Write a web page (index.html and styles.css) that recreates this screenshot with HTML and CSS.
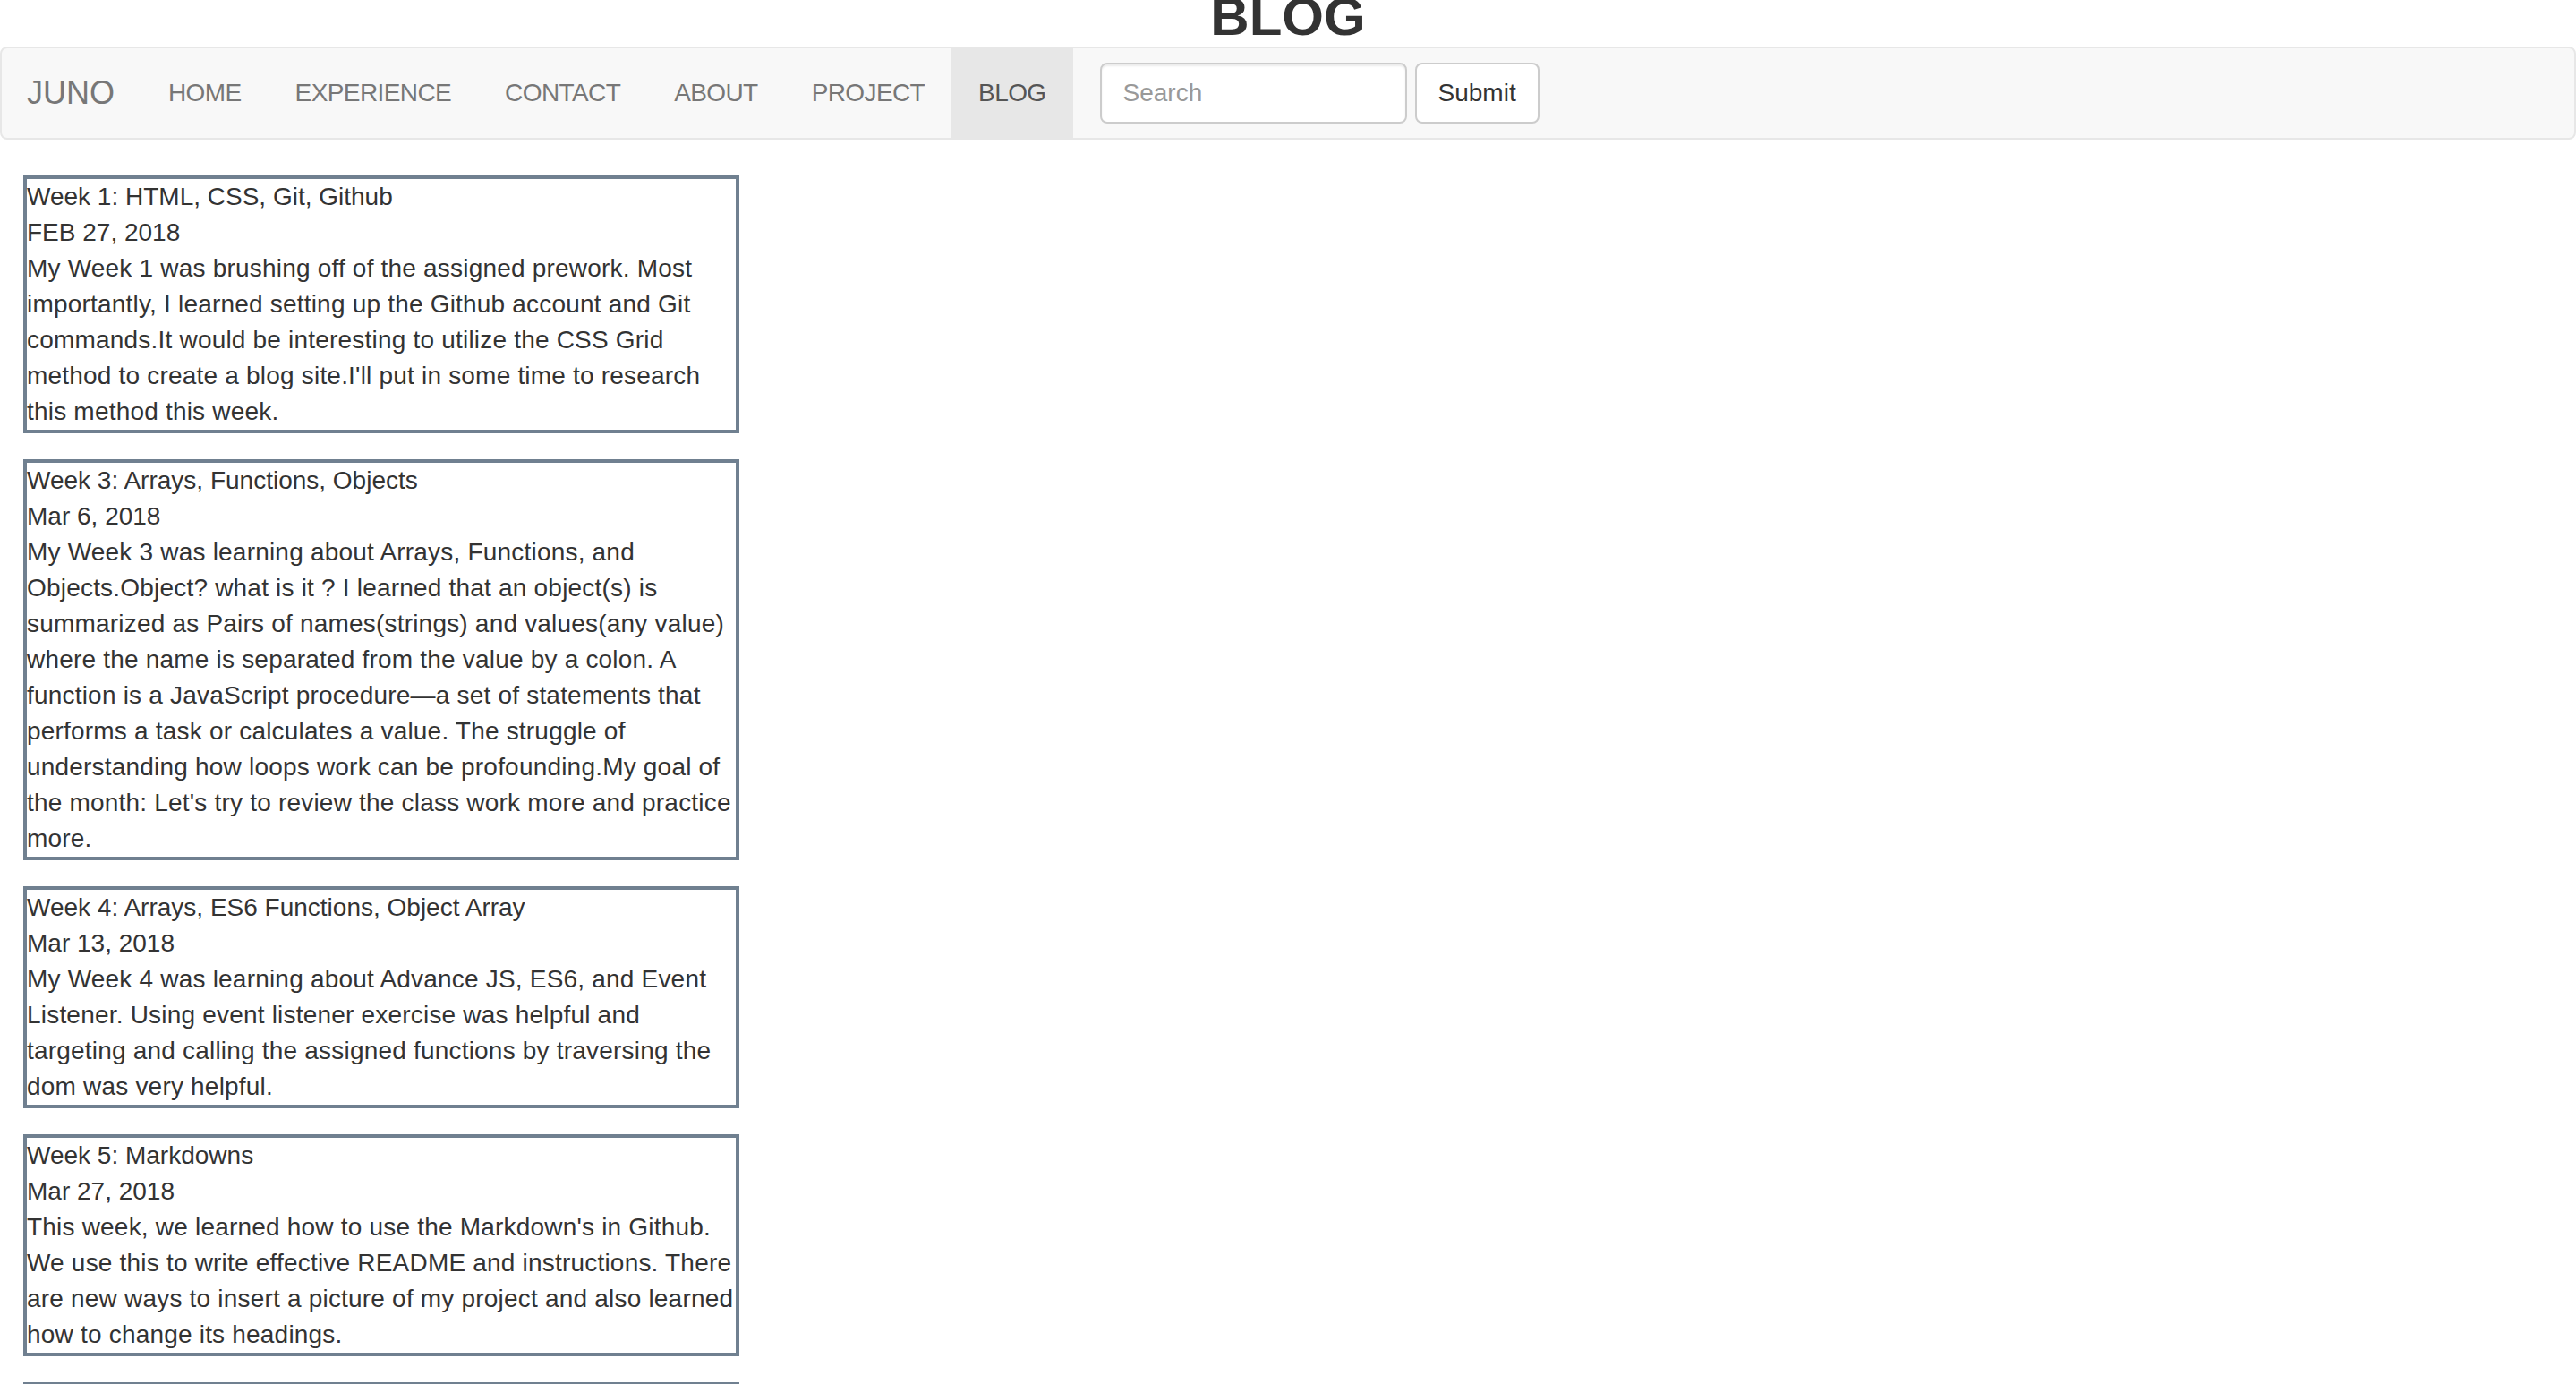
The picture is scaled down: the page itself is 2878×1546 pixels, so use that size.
FILE: index.html
```html
<!DOCTYPE html>
<html lang="en">
<head>
<meta charset="utf-8">
<title>Blog</title>
<link rel="stylesheet" href="styles.css">
</head>
<body>
<h1 class="page-title">BLOG</h1>
<nav class="navbar">
  <a class="brand" href="#">JUNO</a>
  <ul class="nav">
    <li><a href="#">HOME</a></li>
    <li><a href="#">EXPERIENCE</a></li>
    <li><a href="#">CONTACT</a></li>
    <li><a href="#">ABOUT</a></li>
    <li><a href="#">PROJECT</a></li>
    <li class="active"><a href="#">BLOG</a></li>
  </ul>
  <form class="search">
    <input class="search-input" type="text" placeholder="Search">
    <button class="btn" type="submit">Submit</button>
  </form>
</nav>
<main class="posts">
  <article class="post">
    <div class="post-title">Week 1: HTML, CSS, Git, Github</div>
    <div class="post-date">FEB 27, 2018</div>
    <p class="post-body">My Week 1 was brushing off of the assigned prework. Most importantly, I learned setting up the Github account and Git commands.It would be interesting to utilize the CSS Grid method to create a blog site.I'll put in some time to research this method this week.</p>
  </article>
  <article class="post">
    <div class="post-title">Week 3: Arrays, Functions, Objects</div>
    <div class="post-date">Mar 6, 2018</div>
    <p class="post-body">My Week 3 was learning about Arrays, Functions, and Objects.Object? what is it ? I learned that an object(s) is summarized as Pairs of names(strings) and values(any value) where the name is separated from the value by a colon. A function is a JavaScript procedure—a set of statements that performs a task or calculates a value. The struggle of understanding how loops work can be profounding.My goal of the month: Let's try to review the class work more and practice more.</p>
  </article>
  <article class="post">
    <div class="post-title">Week 4: Arrays, ES6 Functions, Object Array</div>
    <div class="post-date">Mar 13, 2018</div>
    <p class="post-body">My Week 4 was learning about Advance JS, ES6, and Event Listener. Using event listener exercise was helpful and targeting and calling the assigned functions by traversing the dom was very helpful.</p>
  </article>
  <article class="post">
    <div class="post-title">Week 5: Markdowns</div>
    <div class="post-date">Mar 27, 2018</div>
    <p class="post-body">This week, we learned how to use the Markdown's in Github. We use this to write effective README and instructions. There are new ways to insert a picture of my project and also learned how to change its headings.</p>
  </article>
  <article class="post">
    <div class="post-title">Week 6: Projects</div>
    <div class="post-date">Apr 3, 2018</div>
  </article>
</main>
</body>
</html>
```

FILE: styles.css
```css
* { box-sizing: border-box; }

html, body {
  margin: 0;
  padding: 0;
  background: #fff;
}

body {
  font-family: "Liberation Sans", Arial, Helvetica, sans-serif;
  font-size: 28px;
  line-height: 40px;
  color: #333;
  overflow: hidden;
}

.page-title {
  margin: -14px 0 0;
  font-size: 60px;
  line-height: 66px;
  font-weight: 700;
  text-align: center;
  color: #333;
}

.navbar {
  display: flex;
  align-items: flex-start;
  height: 104px;
  margin-bottom: 40px;
  background: #f8f8f8;
  border: 2px solid #e7e7e7;
  border-radius: 8px;
}

.brand {
  padding: 30px 30px 30px 28px;
  font-size: 36px;
  line-height: 40px;
  color: #777;
  text-decoration: none;
}

.nav {
  display: flex;
  margin: 0;
  padding: 0;
  list-style: none;
}

.nav a {
  display: block;
  padding: 30px;
  line-height: 40px;
  letter-spacing: -0.6px;
  color: #777;
  text-decoration: none;
}

.nav .active a {
  background: #e7e7e7;
  color: #555;
}

.search {
  display: flex;
  gap: 9px;
  margin: 0;
  padding: 16px 30px;
}

.search-input {
  width: 343px;
  height: 68px;
  padding: 12px 24px;
  font-family: inherit;
  font-size: 28px;
  line-height: 40px;
  color: #555;
  background: #fff;
  border: 2px solid #ccc;
  border-radius: 8px;
  box-shadow: inset 0 2px 2px rgba(0, 0, 0, 0.075);
  outline: none;
}

.search-input::placeholder {
  color: #999;
}

.btn {
  height: 68px;
  padding: 12px 24px;
  font-family: inherit;
  font-size: 28px;
  line-height: 40px;
  color: #333;
  background: #fff;
  border: 2px solid #ccc;
  border-radius: 8px;
}

.posts {
  display: flex;
  flex-direction: column;
  gap: 29px;
  padding-left: 26px;
}

.post {
  width: 800px;
  border: 4px solid #708090;
}

.post-title,
.post-date,
.post-body {
  margin: 0;
}

.post-body {
  letter-spacing: 0.2px;
}
```
